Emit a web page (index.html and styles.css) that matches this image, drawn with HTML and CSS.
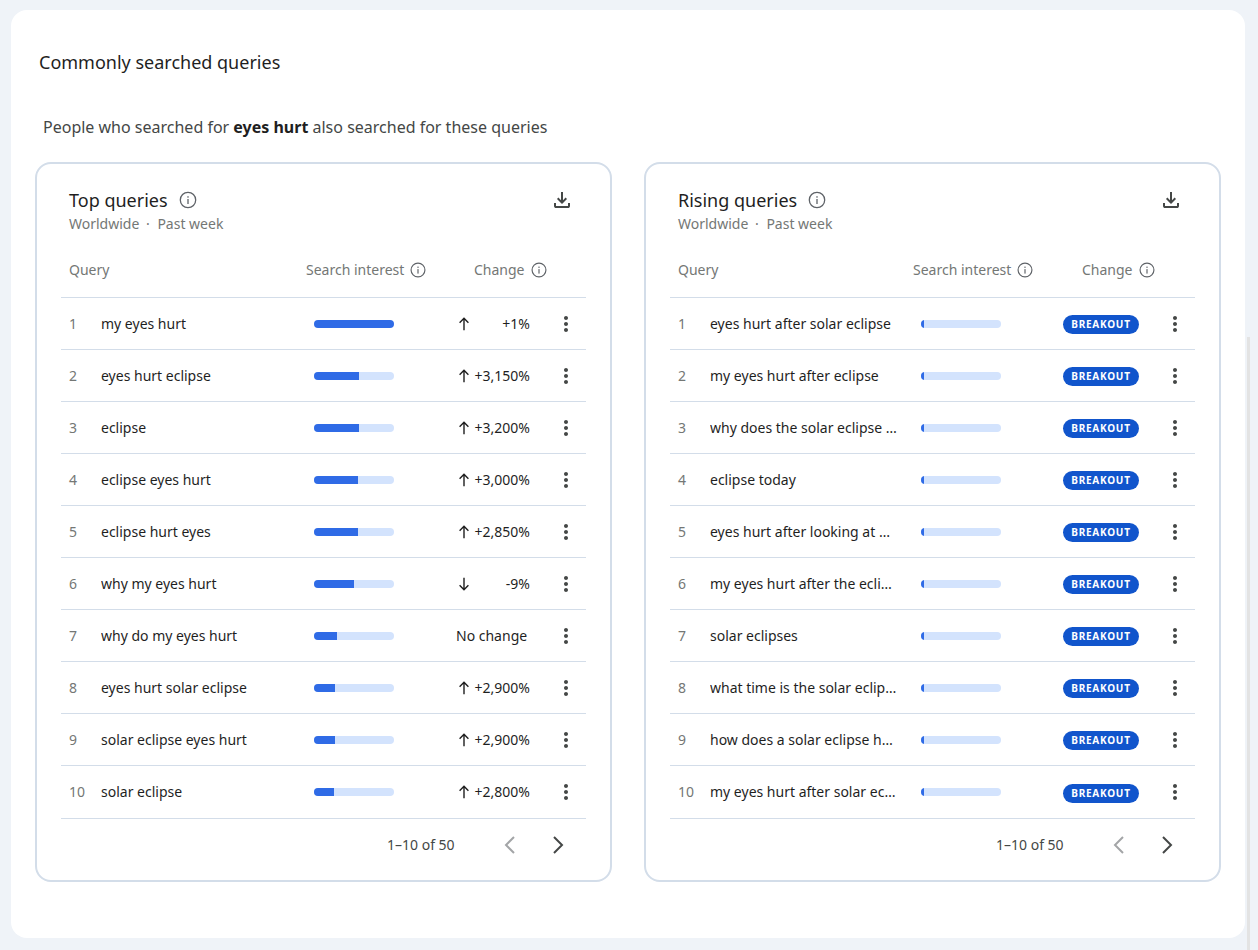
FILE: index.html
```html
<!DOCTYPE html>
<html lang="en">

<head>
    <meta charset="UTF-8">
    <title>Commonly searched queries</title>
    <link rel="stylesheet" href="styles.css">
</head>

<body>
    <svg class="defs" width="0" height="0">
        <symbol id="i-info" viewBox="0 0 20 20">
            <circle cx="10" cy="10" r="7.7" fill="none" stroke="currentColor" stroke-width="1.3"></circle>
            <rect x="9.35" y="9" width="1.3" height="5" fill="currentColor"></rect>
            <rect x="9.35" y="6.2" width="1.3" height="1.5" fill="currentColor"></rect>
        </symbol>
        <symbol id="i-download" viewBox="0 0 24 24">
            <path d="M12 16l-5-5 1.4-1.45 2.6 2.6V4h2v8.15l2.6-2.6L17 11l-5 5zM6 20c-.55 0-1.02-.2-1.41-.59C4.2 19.02 4 18.55 4 18v-3h2v3h12v-3h2v3c0 .55-.2 1.02-.59 1.41-.39.39-.86.59-1.41.59H6z" fill="currentColor"></path>
        </symbol>
        <symbol id="i-up" viewBox="0 0 16 16">
            <path d="M8 14.2V2.4M3.6 6.7L8 2.3 12.4 6.7" fill="none" stroke="currentColor" stroke-width="1.4"></path>
        </symbol>
        <symbol id="i-down" viewBox="0 0 16 16">
            <path d="M8 1.8V13.6M3.6 9.3L8 13.7 12.4 9.3" fill="none" stroke="currentColor" stroke-width="1.4"></path>
        </symbol>
        <symbol id="i-more" viewBox="0 0 24 24">
            <path d="M12 8c1.1 0 2-.9 2-2s-.9-2-2-2-2 .9-2 2 .9 2 2 2zm0 2c-1.1 0-2 .9-2 2s.9 2 2 2 2-.9 2-2-.9-2-2-2zm0 6c-1.1 0-2 .9-2 2s.9 2 2 2 2-.9 2-2-.9-2-2-2z" fill="currentColor"></path>
        </symbol>
        <symbol id="i-prev" viewBox="0 0 24 24">
            <path d="M16 4l-8 8 8 8" fill="none" stroke="currentColor" stroke-width="2"></path>
        </symbol>
        <symbol id="i-next" viewBox="0 0 24 24">
            <path d="M8 4l8 8-8 8" fill="none" stroke="currentColor" stroke-width="2"></path>
        </symbol>
    </svg>

    <div class="panel">
        <h1 class="panel-title">Commonly searched queries</h1>
        <p class="panel-sub">People who searched for <b>eyes hurt</b> also searched for these queries</p>

        <div class="cards">
            <section class="card top">
                <div class="card-head">
                    <div>
                        <h2 class="card-title">Top queries <svg class="ico-info"><use href="#i-info"></use></svg></h2>
                        <div class="card-meta">Worldwide <span class="dot">·</span> Past week</div>
                    </div>
                    <svg class="ico-download"><use href="#i-download"></use></svg>
                </div>
                <div class="thead">
                    <span class="th-query">Query</span>
                    <span class="th-interest">Search interest <svg class="ico-info"><use href="#i-info"></use></svg></span>
                    <span class="th-change">Change <svg class="ico-info"><use href="#i-info"></use></svg></span>
                </div>

                <div class="row">
                    <span class="num">1</span><span class="name">my eyes hurt</span>
                    <span class="bar"><i class="fill" style="width:80px"></i></span>
                    <span class="change"><svg class="ico-arrow"><use href="#i-up"></use></svg><span>+1%</span></span>
                    <svg class="ico-more"><use href="#i-more"></use></svg>
                </div>
                <div class="row">
                    <span class="num">2</span><span class="name">eyes hurt eclipse</span>
                    <span class="bar"><i class="fill" style="width:45px"></i></span>
                    <span class="change"><svg class="ico-arrow"><use href="#i-up"></use></svg><span>+3,150%</span></span>
                    <svg class="ico-more"><use href="#i-more"></use></svg>
                </div>
                <div class="row">
                    <span class="num">3</span><span class="name">eclipse</span>
                    <span class="bar"><i class="fill" style="width:45px"></i></span>
                    <span class="change"><svg class="ico-arrow"><use href="#i-up"></use></svg><span>+3,200%</span></span>
                    <svg class="ico-more"><use href="#i-more"></use></svg>
                </div>
                <div class="row">
                    <span class="num">4</span><span class="name">eclipse eyes hurt</span>
                    <span class="bar"><i class="fill" style="width:44px"></i></span>
                    <span class="change"><svg class="ico-arrow"><use href="#i-up"></use></svg><span>+3,000%</span></span>
                    <svg class="ico-more"><use href="#i-more"></use></svg>
                </div>
                <div class="row">
                    <span class="num">5</span><span class="name">eclipse hurt eyes</span>
                    <span class="bar"><i class="fill" style="width:44px"></i></span>
                    <span class="change"><svg class="ico-arrow"><use href="#i-up"></use></svg><span>+2,850%</span></span>
                    <svg class="ico-more"><use href="#i-more"></use></svg>
                </div>
                <div class="row">
                    <span class="num">6</span><span class="name">why my eyes hurt</span>
                    <span class="bar"><i class="fill" style="width:40px"></i></span>
                    <span class="change"><svg class="ico-arrow"><use href="#i-down"></use></svg><span>-9%</span></span>
                    <svg class="ico-more"><use href="#i-more"></use></svg>
                </div>
                <div class="row">
                    <span class="num">7</span><span class="name">why do my eyes hurt</span>
                    <span class="bar"><i class="fill" style="width:23px"></i></span>
                    <span class="change no-change">No change</span>
                    <svg class="ico-more"><use href="#i-more"></use></svg>
                </div>
                <div class="row">
                    <span class="num">8</span><span class="name">eyes hurt solar eclipse</span>
                    <span class="bar"><i class="fill" style="width:21px"></i></span>
                    <span class="change"><svg class="ico-arrow"><use href="#i-up"></use></svg><span>+2,900%</span></span>
                    <svg class="ico-more"><use href="#i-more"></use></svg>
                </div>
                <div class="row">
                    <span class="num">9</span><span class="name">solar eclipse eyes hurt</span>
                    <span class="bar"><i class="fill" style="width:21px"></i></span>
                    <span class="change"><svg class="ico-arrow"><use href="#i-up"></use></svg><span>+2,900%</span></span>
                    <svg class="ico-more"><use href="#i-more"></use></svg>
                </div>
                <div class="row last">
                    <span class="num">10</span><span class="name">solar eclipse</span>
                    <span class="bar"><i class="fill" style="width:20px"></i></span>
                    <span class="change"><svg class="ico-arrow"><use href="#i-up"></use></svg><span>+2,800%</span></span>
                    <svg class="ico-more"><use href="#i-more"></use></svg>
                </div>

                <div class="pager">
                    <span class="pager-text">1–10 of 50</span>
                    <svg class="ico-page off"><use href="#i-prev"></use></svg>
                    <svg class="ico-page"><use href="#i-next"></use></svg>
                </div>
            </section>

            <section class="card rising">
                <div class="card-head">
                    <div>
                        <h2 class="card-title">Rising queries <svg class="ico-info"><use href="#i-info"></use></svg></h2>
                        <div class="card-meta">Worldwide <span class="dot">·</span> Past week</div>
                    </div>
                    <svg class="ico-download"><use href="#i-download"></use></svg>
                </div>
                <div class="thead">
                    <span class="th-query">Query</span>
                    <span class="th-interest">Search interest <svg class="ico-info"><use href="#i-info"></use></svg></span>
                    <span class="th-change">Change <svg class="ico-info"><use href="#i-info"></use></svg></span>
                </div>

                <div class="row">
                    <span class="num">1</span><span class="name">eyes hurt after solar eclipse</span>
                    <span class="bar"><i class="fill"></i></span>
                    <span class="pill">BREAKOUT</span>
                    <svg class="ico-more"><use href="#i-more"></use></svg>
                </div>
                <div class="row">
                    <span class="num">2</span><span class="name">my eyes hurt after eclipse</span>
                    <span class="bar"><i class="fill"></i></span>
                    <span class="pill">BREAKOUT</span>
                    <svg class="ico-more"><use href="#i-more"></use></svg>
                </div>
                <div class="row">
                    <span class="num">3</span><span class="name">why does the solar eclipse hurt your eyes</span>
                    <span class="bar"><i class="fill"></i></span>
                    <span class="pill">BREAKOUT</span>
                    <svg class="ico-more"><use href="#i-more"></use></svg>
                </div>
                <div class="row">
                    <span class="num">4</span><span class="name">eclipse today</span>
                    <span class="bar"><i class="fill"></i></span>
                    <span class="pill">BREAKOUT</span>
                    <svg class="ico-more"><use href="#i-more"></use></svg>
                </div>
                <div class="row">
                    <span class="num">5</span><span class="name">eyes hurt after looking at eclipse</span>
                    <span class="bar"><i class="fill"></i></span>
                    <span class="pill">BREAKOUT</span>
                    <svg class="ico-more"><use href="#i-more"></use></svg>
                </div>
                <div class="row">
                    <span class="num">6</span><span class="name">my eyes hurt after the eclipse</span>
                    <span class="bar"><i class="fill"></i></span>
                    <span class="pill">BREAKOUT</span>
                    <svg class="ico-more"><use href="#i-more"></use></svg>
                </div>
                <div class="row">
                    <span class="num">7</span><span class="name">solar eclipses</span>
                    <span class="bar"><i class="fill"></i></span>
                    <span class="pill">BREAKOUT</span>
                    <svg class="ico-more"><use href="#i-more"></use></svg>
                </div>
                <div class="row">
                    <span class="num">8</span><span class="name">what time is the solar eclipse</span>
                    <span class="bar"><i class="fill"></i></span>
                    <span class="pill">BREAKOUT</span>
                    <svg class="ico-more"><use href="#i-more"></use></svg>
                </div>
                <div class="row">
                    <span class="num">9</span><span class="name">how does a solar eclipse hurt your eyes</span>
                    <span class="bar"><i class="fill"></i></span>
                    <span class="pill">BREAKOUT</span>
                    <svg class="ico-more"><use href="#i-more"></use></svg>
                </div>
                <div class="row last">
                    <span class="num">10</span><span class="name">my eyes hurt after solar eclipse</span>
                    <span class="bar"><i class="fill"></i></span>
                    <span class="pill">BREAKOUT</span>
                    <svg class="ico-more"><use href="#i-more"></use></svg>
                </div>

                <div class="pager">
                    <span class="pager-text">1–10 of 50</span>
                    <svg class="ico-page off"><use href="#i-prev"></use></svg>
                    <svg class="ico-page"><use href="#i-next"></use></svg>
                </div>
            </section>
        </div>
    </div>

    <div class="scroll-thumb"></div>
</body>

</html>
```

FILE: styles.css
```css
* {
    box-sizing: border-box;
}

html,
body {
    height: 950px;
    overflow: hidden;
}

body {
    margin: 0;
    background: #eff3f8;
    color: #1f1f1f;
    font-family: "Noto Sans", "Open Sans", sans-serif;
    font-size: 14px;
    line-height: 20px;
}

.defs {
    display: block;
    height: 0;
}

.panel {
    width: 1234px;
    height: 928px;
    margin: 10px 0 0 11px;
    padding: 40px 24px 0;
    background: #fff;
    border-radius: 16px;
}

.panel-title {
    margin: 0;
    padding-left: 4px;
    font-size: 18px;
    font-weight: 400;
    line-height: 24px;
}

.panel-sub {
    margin: 43px 0 0;
    padding-left: 8px;
    color: #444746;
    font-size: 16px;
}

.panel-sub b {
    color: #1f1f1f;
}

.cards {
    display: flex;
    gap: 32px;
    margin-top: 25px;
}

.card {
    width: 577px;
    height: 720px;
    padding: 24px 24px 0;
    border: 2px solid #d3dde9;
    border-radius: 16px;
}

.card-head {
    display: flex;
    justify-content: space-between;
    height: 46px;
    padding-left: 8px;
}

.card-title {
    display: flex;
    align-items: center;
    margin: 0 0 2px;
    font-size: 18px;
    font-weight: 400;
    line-height: 24px;
}

.card-meta {
    color: #747775;
}

.dot {
    margin: 0 4px 0 3px;
}

.ico-info {
    width: 20px;
    height: 20px;
    margin-left: 10px;
    color: #5f6368;
}

.ico-download {
    width: 24px;
    height: 24px;
    margin-right: 12px;
    color: #444746;
}

.thead {
    display: flex;
    align-items: center;
    height: 53px;
    margin-top: 11px;
    padding: 0 0 3px 8px;
    border-bottom: 1px solid #d3dde9;
    color: #747775;
}

.thead span {
    display: flex;
    align-items: center;
}

.thead .ico-info {
    width: 18px;
    height: 18px;
    margin-left: 5px;
}

.top .th-query {
    width: 237px;
}

.top .th-interest {
    width: 168px;
}

.rising .th-query {
    width: 235px;
}

.rising .th-interest {
    width: 169px;
}

.row {
    display: grid;
    align-items: center;
    height: 52px;
    border-bottom: 1px solid #d3dde9;
}

.row.last {
    height: 53px;
}

.top .row {
    grid-template-columns: 40px 213px 80px 136px 1fr;
}

.rising .row {
    grid-template-columns: 40px 211px 80px 138px 1fr;
}

.num {
    padding-left: 8px;
    color: #747775;
}

.name {
    overflow: hidden;
    padding-right: 24px;
    white-space: nowrap;
    text-overflow: ellipsis;
}

.bar {
    display: block;
    overflow: hidden;
    width: 80px;
    height: 8px;
    background: #d3e3fd;
    border-radius: 4px;
}

.fill {
    display: block;
    width: 3px;
    height: 8px;
    background: #2f6be6;
}

.change {
    display: flex;
    align-items: center;
    justify-content: space-between;
    padding-left: 62px;
}

.no-change {
    white-space: nowrap;
}

.ico-arrow {
    width: 16px;
    height: 16px;
    color: #1f1f1f;
}

.pill {
    justify-self: end;
    width: 76px;
    height: 19px;
    margin-top: 2px;
    background: #1155cc;
    border-radius: 10px;
    color: #fff;
    font-size: 10px;
    font-weight: 700;
    line-height: 19px;
    letter-spacing: 0.75px;
    text-align: center;
}

.ico-more {
    justify-self: end;
    width: 24px;
    height: 24px;
    margin-right: 8px;
    color: #444746;
}

.pager {
    display: flex;
    gap: 24px;
    align-items: center;
    height: 52px;
    padding-left: 326px;
}

.pager-text {
    flex: none;
    width: 87px;
    color: #444746;
}

.ico-page {
    flex: none;
    width: 24px;
    height: 24px;
    color: #444746;
}

.ico-page.off {
    color: #a3a5a7;
}

.scroll-thumb {
    position: absolute;
    top: 337px;
    left: 1247px;
    width: 3px;
    height: 613px;
    background: #e3e3e3;
}
```
